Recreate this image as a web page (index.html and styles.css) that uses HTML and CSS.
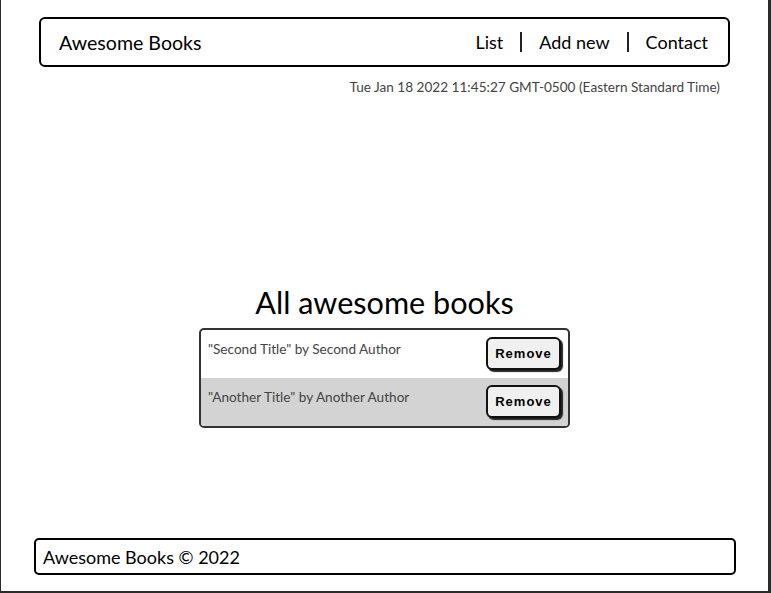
FILE: index.html
```html
<!DOCTYPE html>
<html lang="en">
<head>
<meta charset="utf-8">
<title>Awesome Books</title>
<link rel="stylesheet" href="styles.css">
</head>
<body>
<div class="frame">
  <header class="header">
    <h1 class="brand">Awesome Books</h1>
    <nav class="nav">
      <a class="nav-link" href="#">List</a>
      <span class="nav-sep"></span>
      <a class="nav-link" href="#">Add new</a>
      <span class="nav-sep"></span>
      <a class="nav-link" href="#">Contact</a>
    </nav>
  </header>
  <p class="date">Tue Jan 18 2022 11:45:27 GMT-0500 (Eastern Standard Time)</p>
  <main class="main">
    <h2 class="title">All awesome books</h2>
    <ul class="books">
      <li class="book">
        <span class="book-text">"Second Title" by Second Author</span>
        <button class="remove">Remove</button>
      </li>
      <li class="book book-alt">
        <span class="book-text">"Another Title" by Another Author</span>
        <button class="remove">Remove</button>
      </li>
    </ul>
  </main>
  <footer class="footer">Awesome Books © 2022</footer>
</div>
</body>
</html>
```
FILE: styles.css
```css
* { box-sizing: border-box; }
html, body { margin: 0; padding: 0; background: #fff; }
body { font-family: "Lato", "Noto Sans", sans-serif; color: #000; }
.frame {
  height: 593px;
  border-left: 1px solid #2b2b2b;
  border-right: 3px solid #2b2b2b;
  border-bottom: 2px solid #2b2b2b;
  display: flex;
  flex-direction: column;
}
.header {
  margin: 17px 38px 0 38px;
  height: 50px;
  border: 2px solid #000;
  border-radius: 6px;
  display: flex;
  align-items: center;
  justify-content: space-between;
  padding: 0 20px 0 18px;
}
.brand { margin: 0; font-size: 19.6px; font-weight: 400; }
.nav { display: flex; align-items: center; gap: 17px; }
.nav-link { color: #000; text-decoration: none; font-size: 18px; }
.nav-sep { width: 2px; height: 20px; background: #222; }
.date {
  margin: 12px 48px 0 0;
  text-align: right;
  font-size: 13.6px;
  color: #444;
}
.main {
  flex: 1;
  display: flex;
  flex-direction: column;
  align-items: center;
  padding-top: 189px;
}
.title { margin: 0 0 7px; font-size: 30.6px; font-weight: 400; }
.books {
  list-style: none;
  margin: 0;
  padding: 0;
  width: 371px;
  border: 2px solid #333;
  border-radius: 5px;
  overflow: hidden;
}
.book {
  height: 48px;
  display: flex;
  justify-content: space-between;
  align-items: flex-start;
  padding: 7px 7px 0 7px;
  font-size: 13.6px;
  color: #444;
}
.book-text { padding-top: 4px; }
.book-alt { background: #d3d3d3; }
.remove {
  width: 75px;
  height: 33px;
  border: 2px solid #111;
  border-radius: 6px;
  background: #f0f0f0;
  box-shadow: 2px 2px 1px #222;
  font-family: "Liberation Sans", Arial, sans-serif;
  font-weight: 700;
  font-size: 13px;
  letter-spacing: 1px;
  color: #000;
  padding: 0;
}
.footer {
  margin: 0 32px 16px 33px;
  height: 37px;
  border: 2px solid #000;
  border-radius: 5px;
  padding: 0 7px;
  display: flex;
  align-items: center;
  font-size: 18px;
}
```
